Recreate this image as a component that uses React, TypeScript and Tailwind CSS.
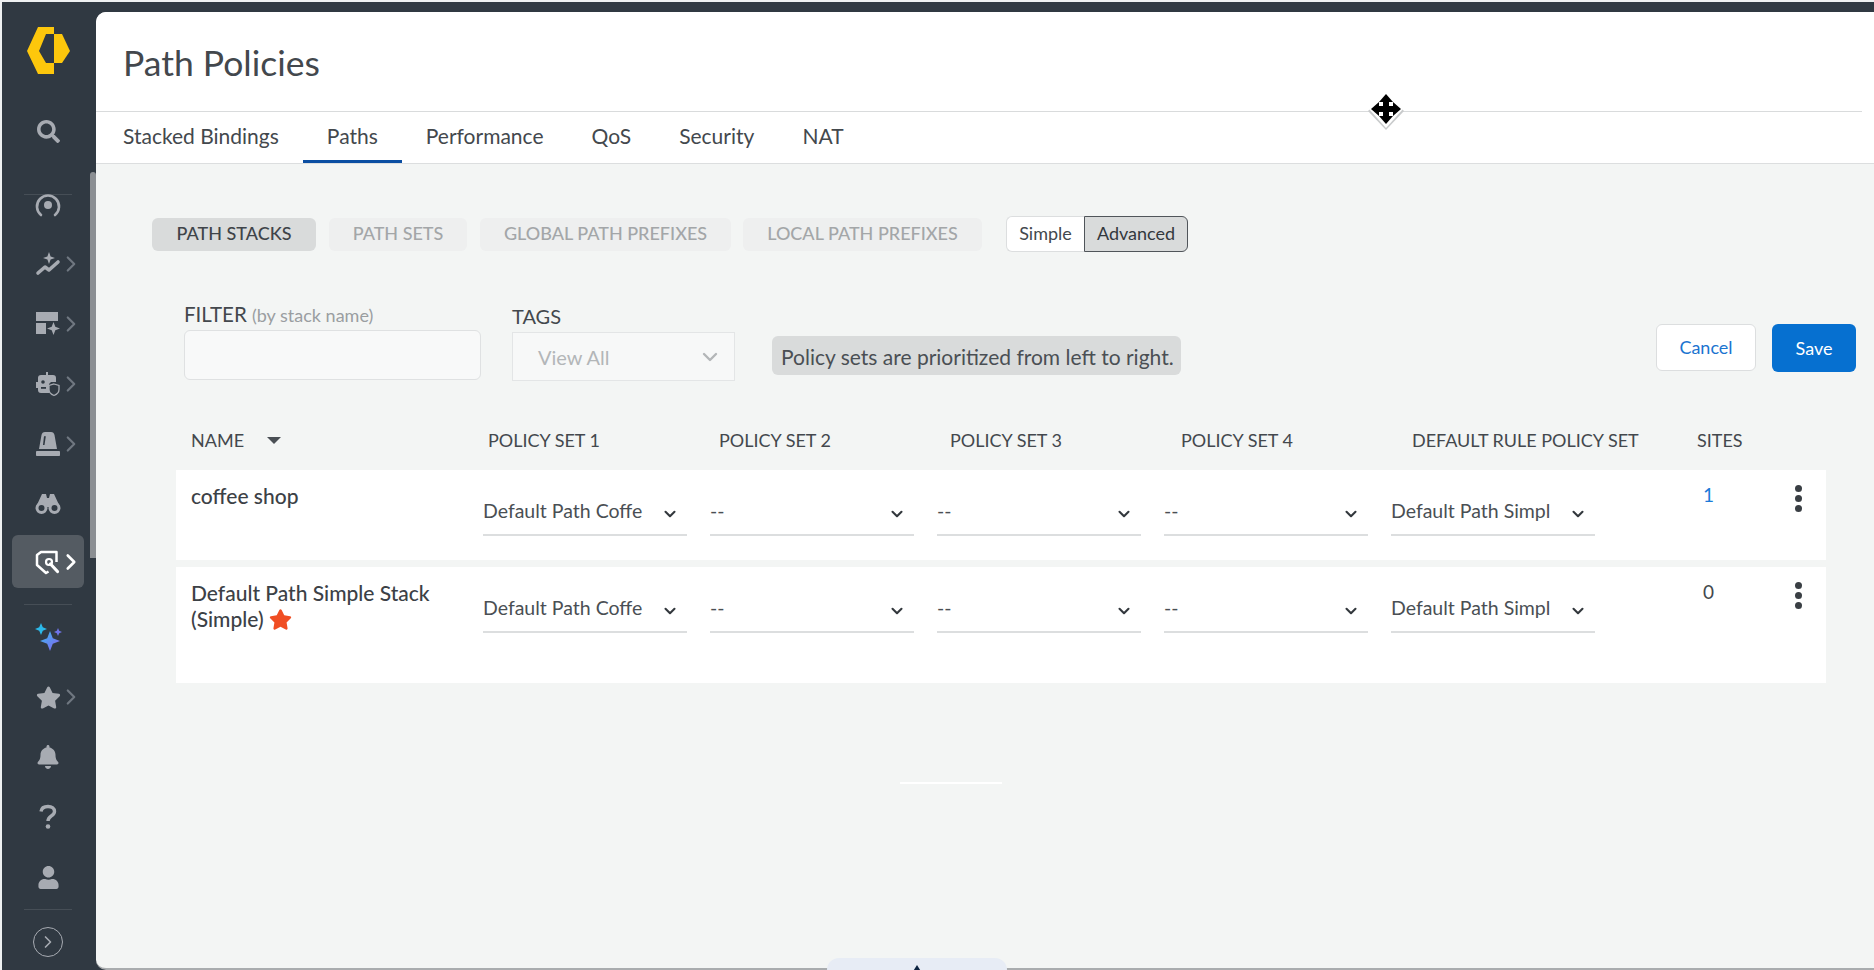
import { ChevronDown, ChevronRight } from "lucide-react";
import { FaBell, FaSearch, FaStar, FaUser } from "react-icons/fa";

const navIcon = "h-[60px] relative flex items-center justify-center shrink-0 pr-[2px]";
const navChevron = "absolute left-[56px] top-1/2 -translate-y-1/2 text-[#6f7780]";

function Logo() {
  return (
    <svg width="43" height="47" viewBox="0 0 43 47" fill="#fdc70c">
      <path d="M27 0H11L0 24l11 23h16V36h-8L12 24l7-17h8z" />
      <path d="M27 7h8l8 17-8 12h-8z" />
    </svg>
  );
}

function TargetIcon() {
  return (
    <svg width="26" height="26" viewBox="0 0 26 26" fill="none" stroke="#a7abb2" strokeWidth="2.6">
      <path d="M6 23a11 11 0 1 1 14 0" strokeLinecap="round" />
      <circle cx="13" cy="13" r="4" fill="#a7abb2" stroke="none" />
    </svg>
  );
}

function TrendIcon() {
  return (
    <svg width="26" height="24" viewBox="0 0 26 24" fill="#a7abb2">
      <path d="M3 21l7-6 4 3 9-8" fill="none" stroke="#a7abb2" strokeWidth="3.6" strokeLinecap="round" strokeLinejoin="round" />
      <path d="M14 0l1.6 4.4L20 6l-4.4 1.600L14 12l-1.600-4.400L8 6l4.400-1.600z" />
    </svg>
  );
}

function WidgetIcon() {
  return (
    <svg width="26" height="26" viewBox="0 0 26 26" fill="#a7abb2">
      <rect x="1" y="1" width="22" height="9" />
      <rect x="1" y="12" width="10" height="11" />
      <path d="M18.5 11l1.8 4.7L25 17.500l-4.700 1.800L18.500 24l-1.800-4.700L12 17.500l4.700-1.800z" />
    </svg>
  );
}

function RobotIcon() {
  return (
    <svg width="26" height="26" viewBox="0 0 26 26">
      <path fill="#a7abb2" d="M11 1h2v3h5a3 3 0 0 1 3 3v4h-5l-2 2v7l1 2H6a3 3 0 0 1-3-3v-2H1v-6h2V7a3 3 0 0 1 3-3h5z" />
      <circle cx="8" cy="11" r="1.800" fill="#303942" />
      <rect x="6" y="16" width="5" height="1.800" fill="#303942" />
      <path fill="#303942" stroke="#a7abb2" strokeWidth="1.300" d="M19 13l5 1.500v4c0 3-2.500 5-5 6-2.500-1-5-3-5-6v-4z" />
    </svg>
  );
}

function SirenIcon() {
  return (
    <svg width="26" height="26" viewBox="0 0 26 26" fill="#a7abb2">
      <path d="M10 1h6c2 0 3 1 3.500 3L22 18H4L6.500 4C7 2 8 1 10 1zm0 4c-.6 0-1 .4-1.100 1L8 14h1.500l1.300-8.500z" fillRule="evenodd" />
      <rect x="1" y="20" width="24" height="5" rx="0.800" />
    </svg>
  );
}

function BinocularsIcon() {
  return (
    <svg width="26" height="22" viewBox="0 0 26 22" fill="none">
      <path fill="#a7abb2" d="M7 1h4l1 4h2l1-4h4l6 13H1z" />
      <circle cx="6.500" cy="15" r="4.500" fill="#303942" stroke="#a7abb2" strokeWidth="3" />
      <circle cx="19.500" cy="15" r="4.500" fill="#303942" stroke="#a7abb2" strokeWidth="3" />
    </svg>
  );
}

function ShieldWrenchIcon() {
  return (
    <svg width="26" height="26" viewBox="0 0 26 26" fill="none" stroke="#ffffff" strokeWidth="2.500">
      <path d="M21.500 13V3H6L2 6v10l9 8 2.500-1.500" strokeLinejoin="round" />
      <path d="M15.500 15l7 7.500" strokeWidth="3.200" strokeLinecap="round" />
      <circle cx="14" cy="13" r="3" strokeWidth="2.200" />
    </svg>
  );
}

function QuestionIcon() {
  return (
    <svg width="20" height="26" viewBox="0 0 20 26" fill="none" stroke="#a7abb2" strokeWidth="3.400">
      <path d="M3 7.500C3.500 4 6.500 2.500 10 2.500c4 0 6.500 2 6.500 5 0 4.500-6.500 4.500-6.500 9.500" />
      <circle cx="10" cy="22.500" r="2.300" fill="#a7abb2" stroke="none" />
    </svg>
  );
}

function SparkleIcon() {
  return (
    <svg width="30" height="30" viewBox="0 0 30 30">
      <defs>
        <linearGradient id="sparkle" x1="0" y1="0" x2="1" y2="1">
          <stop offset="0" stopColor="#38bdf0" />
          <stop offset="1" stopColor="#8a5cf0" />
        </linearGradient>
      </defs>
      <path fill="#2cb9ea" d="M7 1l1.800 4.200L13 7 8.800 8.800 7 13 5.200 8.800 1 7l4.200-1.800z" />
      <path fill="#6f74e8" d="M24 6l1.200 2.800L28 10l-2.800 1.200L24 14l-1.200-2.800L20 10l2.800-1.200z" />
      <path fill="url(#sparkle)" d="M16 9l2.800 7.200L26 19l-7.200 2.800L16 29l-2.800-7.200L6 19l7.200-2.800z" />
    </svg>
  );
}

function Sidebar() {
  return (
    <aside className="w-[94px] shrink-0 bg-[#303942] relative flex flex-col items-stretch overflow-hidden">
      <div className="h-[96px] flex items-center justify-center shrink-0 pr-[2px]">
        <Logo />
      </div>
      <div className={`${navIcon} mt-[3px] text-[#a7abb2]`}>
        <FaSearch size={23} />
      </div>
      <div className="h-[16px] shrink-0 flex items-center justify-center mt-[25px] pr-[2px]">
        <div className="w-[48px] h-px bg-[#464e56]" />
      </div>
      <div className="h-[30px] flex items-center justify-center shrink-0 -mt-[12px] pr-[2px]">
        <TargetIcon />
      </div>
      <div className={`${navIcon} mt-[14px]`}>
        <TrendIcon />
        <ChevronRight size={26} className={navChevron} />
      </div>
      <div className={navIcon}>
        <WidgetIcon />
        <ChevronRight size={26} className={navChevron} />
      </div>
      <div className={navIcon}>
        <RobotIcon />
        <ChevronRight size={26} className={navChevron} />
      </div>
      <div className={navIcon}>
        <SirenIcon />
        <ChevronRight size={26} className={navChevron} />
      </div>
      <div className={navIcon}>
        <BinocularsIcon />
      </div>
      <div className="ml-[10px] mr-[12px] mt-[1px] h-[53px] bg-[#545b62] rounded-md relative flex items-center justify-center shrink-0">
        <ShieldWrenchIcon />
        <ChevronRight size={26} strokeWidth={2.4} className="absolute left-[46px] top-1/2 -translate-y-1/2 text-white" />
      </div>
      <div className="h-[32px] shrink-0 flex items-center justify-center pr-[2px]">
        <div className="w-[48px] h-px bg-[#464e56]" />
      </div>
      <div className="h-[34px] shrink-0 flex items-center justify-center">
        <SparkleIcon />
      </div>
      <div className={`${navIcon} text-[#a7abb2] mt-[13px]`}>
        <FaStar size={25} />
        <ChevronRight size={26} className={navChevron} />
      </div>
      <div className={`${navIcon} text-[#a7abb2]`}>
        <FaBell size={24} />
      </div>
      <div className={navIcon}>
        <QuestionIcon />
      </div>
      <div className={`${navIcon} text-[#a7abb2]`}>
        <FaUser size={23} />
      </div>
      <div className="h-[4px] shrink-0 flex items-center justify-center pr-[2px]">
        <div className="w-[48px] h-px bg-[#464e56]" />
      </div>
      <div className="flex justify-center mt-[16px] pr-[2px]">
        <div className="w-[30px] h-[30px] rounded-full border-[1.5px] border-[#a7abb2] flex items-center justify-center text-[#a7abb2]">
          <ChevronRight size={20} />
        </div>
      </div>
      {/* scrollbar thumb */}
      <div className="absolute left-[88px] top-[170px] w-[6px] h-[386px] rounded-t bg-[#8b8f93]" />
    </aside>
  );
}

function PolicySelect({ value }: { value: string }) {
  return (
    <div className="w-[204px] h-[55px] border-b-2 border-[#dcdedf] flex items-center justify-between shrink-0 pl-0 pr-[8px] pt-[6px]">
      <span className="whitespace-nowrap text-[19.5px] text-[#4a4f54]">{value}</span>
      <ChevronDown size={18} strokeWidth={2.8} className="text-[#33383d] mt-[6px]" />
    </div>
  );
}

function StackRow({ height, sites, children }: { height: string; sites: React.ReactNode; children: React.ReactNode }) {
  return (
    <div className={`${height} bg-white flex items-start pl-[15px]`}>
      <div className="w-[292px] shrink-0 pt-[13px] text-[21px] leading-[26px] font-medium text-[#3c4146]">{children}</div>
      <div className="flex gap-[23px] pt-[11px]">
        <PolicySelect value="Default Path Coffe" />
        <PolicySelect value="--" />
        <PolicySelect value="--" />
        <PolicySelect value="--" />
        <PolicySelect value="Default Path Simpl" />
      </div>
      <div className="w-[100px] ml-[102px] pt-[13px] text-[19px] leading-[24px]">{sites}</div>
      <div className="flex flex-col gap-[3px] pt-[15px] -ml-[2px]">
        <span className="w-[7px] h-[7px] rounded-full bg-[#3a3f44]" />
        <span className="w-[7px] h-[7px] rounded-full bg-[#3a3f44]" />
        <span className="w-[7px] h-[7px] rounded-full bg-[#3a3f44]" />
      </div>
    </div>
  );
}

function MoveCursor() {
  return (
    <svg width="38" height="40" viewBox="0 0 38 40" className="absolute left-[1367px] top-[90px]">
      <path fill="#c9cbcc" d="M19 3l18 18-18 19L1 21z" />
      <path fill="#fff" d="M19 1l17 18-17 19L2 19z" />
      <path fill="#000" d="M19 4l7 8h-4v4h4v-4l8 7-8 7v-4h-4v4h4l-7 8-7-8h4v-4h-4v4l-8-7 8-7v4h4v-4h-4z" />
      <path fill="#000" d="M17 12h4v14h-4zM12 17h14v4H12z" />
    </svg>
  );
}

export default function App() {
  return (
    <div
      className="relative w-[1874px] h-[970px] overflow-hidden bg-[#eef0f1] pl-[2px] pt-[2px]"
      style={{ fontFamily: "Lato, 'Open Sans', sans-serif" }}
    >
      <div className="h-[968px] flex bg-[#303942]">
        <Sidebar />
        <main className="flex-1 mt-[10px] rounded-tl-[10px] rounded-bl-[10px] overflow-hidden bg-[#f3f5f4] border-b-2 border-[#a9acae] flex flex-col">
          <div className="bg-white h-[100px] shrink-0 flex items-center pl-[27px] pt-[2px] text-[35.5px] text-[#43484d] relative">
            Path Policies
            <div className="absolute left-0 right-[12px] bottom-0 h-px bg-[#d9dbdc]" />
          </div>
          <nav className="bg-white h-[52px] shrink-0 border-b border-[#dcdedf] flex items-stretch pl-[27px] text-[21px] text-[#43484d]">
            <span className="flex items-center pb-[3px]">Stacked Bindings</span>
            <span className="flex items-center justify-center ml-[24px] px-[24px] border-b-[3px] border-[#0b4ea2]">Paths</span>
            <span className="flex items-center pb-[3px] ml-[24px]">Performance</span>
            <span className="flex items-center pb-[3px] ml-[48px]">QoS</span>
            <span className="flex items-center pb-[3px] ml-[48px]">Security</span>
            <span className="flex items-center pb-[3px] ml-[48px]">NAT</span>
          </nav>

          <section className="pl-[56px] pt-[52px] flex items-center text-[18px] font-medium">
            <span className="h-[33px] w-[164px] rounded-md bg-[#d9dbdb] text-[#3f4449] flex items-center justify-center pb-[1px]">PATH STACKS</span>
            <span className="h-[33px] w-[138px] ml-[13px] rounded-md bg-[#eeefef] text-[#a3a6a8] flex items-center justify-center pb-[1px]">PATH SETS</span>
            <span className="h-[33px] w-[251px] ml-[13px] rounded-md bg-[#eeefef] text-[#a3a6a8] flex items-center justify-center pb-[1px]">GLOBAL PATH PREFIXES</span>
            <span className="h-[33px] w-[239px] ml-[12px] rounded-md bg-[#eeefef] text-[#a3a6a8] flex items-center justify-center pb-[1px]">LOCAL PATH PREFIXES</span>
            <div className="flex ml-[24px] h-[36px] text-[18px] font-normal">
              <span className="w-[78px] bg-white border border-[#dcdedf] border-r-0 rounded-l-md flex items-center justify-center pb-[1px] text-[#43484d]">Simple</span>
              <span className="w-[104px] bg-[#d9dbdb] border border-[#50555a] rounded-r-md flex items-center justify-center pb-[1px] text-[#33383d]">Advanced</span>
            </div>
          </section>

          <section className="pl-[88px] pr-[18px] pt-[57px] flex items-start h-[170px]">
            <div className="w-[297px] shrink-0 -mt-[5px]">
              <div className="h-[20px] text-[20.5px] leading-[20px] text-[#43484d] whitespace-nowrap">
                FILTER <span className="text-[18px] text-[#9a9ea1]">(by stack name)</span>
              </div>
              <div className="mt-[6px] h-[50px] bg-[#f8f9f9] border border-[#dfe1e2] rounded-md" />
            </div>
            <div className="w-[223px] shrink-0 ml-[31px] -mt-[3px]">
              <div className="h-[20px] text-[20px] leading-[20px] text-[#43484d]">TAGS</div>
              <div className="mt-[6px] h-[49px] bg-[#f7f8f8] border border-[#e3e5e6] flex items-center justify-between pl-[25px] pr-[12px] text-[20px] text-[#b3b6b8]">
                View All
                <ChevronDown size={24} strokeWidth={2.4} />
              </div>
            </div>
            <div className="ml-[37px] mt-[27px] h-[39px] w-[409px] rounded-md bg-[#d9dbdb] flex items-center pl-[9px] pt-[2px] text-[21px] whitespace-nowrap text-[#4a4f54]">
              Policy sets are prioritized from left to right.
            </div>
            <button className="ml-auto mt-[15px] w-[100px] h-[47px] bg-white border border-[#dcdedf] rounded-md text-[18px] text-[#1b74d0]">Cancel</button>
            <button className="ml-[16px] mt-[15px] w-[84px] h-[48px] bg-[#0670d0] rounded-md text-[18px] text-white">Save</button>
          </section>

          <div className="ml-[80px] w-[1650px]">
            <div className="h-[38px] -mt-[1px] flex items-center pl-[15px] text-[18px] text-[#43484d] whitespace-nowrap">
              <span className="w-[76px]">NAME</span>
              <span className="w-0 h-0 border-x-[7px] border-x-transparent border-t-[7px] border-t-[#4a4f54]" />
              <span className="w-[231px] ml-[207px]">POLICY SET 1</span>
              <span className="w-[231px]">POLICY SET 2</span>
              <span className="w-[231px]">POLICY SET 3</span>
              <span className="w-[231px]">POLICY SET 4</span>
              <span className="w-[285px]">DEFAULT RULE POLICY SET</span>
              <span>SITES</span>
            </div>
            <div className="mt-[11px] flex flex-col gap-[7px]">
              <StackRow height="h-[90px]" sites={<span className="ml-[6px] text-[#1b7ad8]">1</span>}>
                coffee shop
              </StackRow>
              <StackRow height="h-[116px]" sites={<span className="ml-[6px] text-[#43484d]">0</span>}>
                Default Path Simple Stack
                <br />
                (Simple) <FaStar size={23} className="inline -mt-[4px] text-[#f04e23]" />
              </StackRow>
            </div>
          </div>
        </main>
      </div>

      {/* stray artefacts over the page */}
      <div className="absolute left-[900px] top-[782px] w-[102px] h-[2px] bg-white" />
      <div className="absolute left-[827px] top-[958px] w-[180px] h-[12px] rounded-t-[20px] bg-[#e7ecf5] flex justify-center overflow-hidden">
        <span className="mt-[7px] w-0 h-0 border-x-[5px] border-x-transparent border-b-[8px] border-b-[#0c2340]" />
      </div>
      <MoveCursor />
    </div>
  );
}
